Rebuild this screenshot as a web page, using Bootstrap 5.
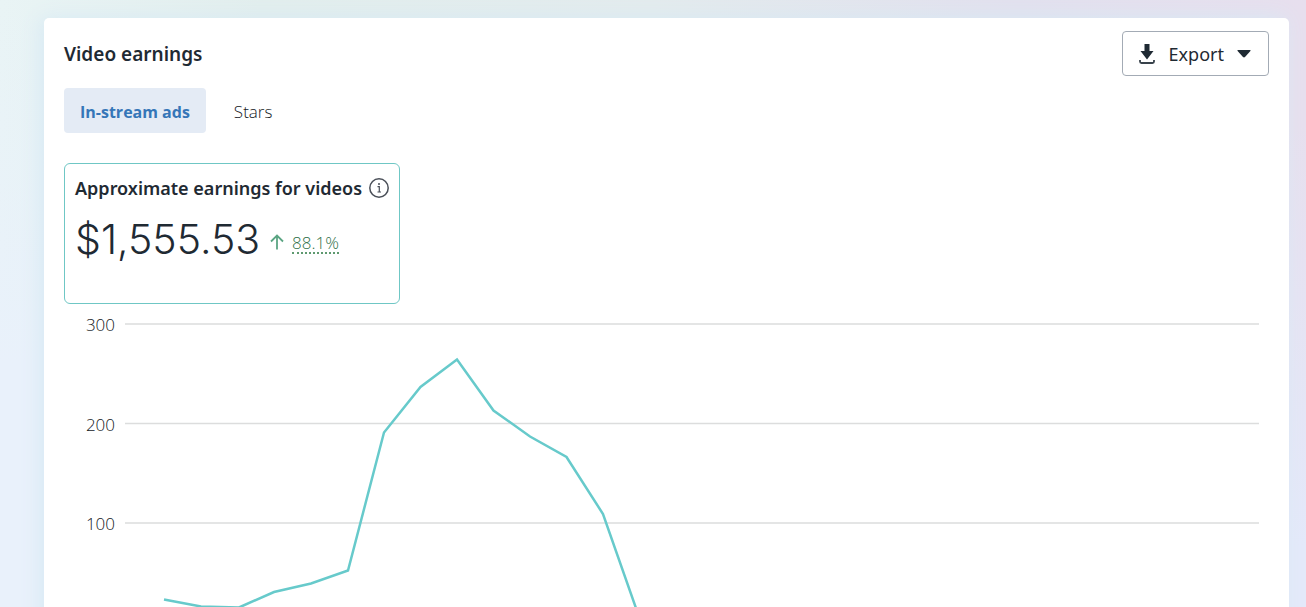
<!DOCTYPE html>
<html lang="en">
<head>
<meta charset="utf-8">
<meta name="viewport" content="width=device-width, initial-scale=1">
<title>Video earnings</title>
<link href="https://cdn.jsdelivr.net/npm/bootstrap@5.3.0/dist/css/bootstrap.min.css" rel="stylesheet">
<style>
  body {
    font-family: "Noto Sans", "Open Sans", sans-serif;
    color: #1f2a33;
    background:
      linear-gradient(to bottom, transparent 0, #e9f1fb 60%) left / 44px 100% no-repeat,
      linear-gradient(to bottom, transparent 20%, #e4e9fa 90%) right / 17px 100% no-repeat,
      linear-gradient(to right, #e9f4f5 0, #e2eeed 20%, #e3ebed 50%, #e2e0ee 78%, #e7dfee 100%);
  }
  .page-frame { padding: 18px 17px 0 44px; }
  .panel { border-radius: 5px 5px 0 0; padding: 13px 20px 0; box-shadow: -4px 0 20px #d8eaf4; }
  .panel-title { font-size: 19px; line-height: 24px; font-weight: 600; }
  .btn-export {
    --bs-btn-color: #1f2a33; --bs-btn-border-color: #a3abb5; --bs-btn-border-radius: 4px;
    --bs-btn-padding-x: 16px; --bs-btn-padding-y: 0;
    height: 45px; font-size: 18px; line-height: 24px;
  }
  .tabs { gap: 12px; margin-top: 12px; --bs-nav-pills-border-radius: 4px; }
  .tabs .nav-link {
    height: 45px; padding: 2px 16px 0; color: #14181e; font-family: "Open Sans", sans-serif; font-size: 17px; font-weight: 300; line-height: 24px;
  }
  .tabs .nav-link.active { background: #e4ebf5; color: #3576b8; font-size: 16px; font-weight: 700; }
  .metric { width: 336px; max-width: 100%; height: 141px; margin-top: 30px; padding: 12px 10px; border: 1px solid #6fc7c5; border-radius: 6px; }
  .metric-name { font-size: 18px; line-height: 24px; font-weight: 600; }
  .metric-value { font-family: Inter, sans-serif; font-size: 41px; line-height: 46px; font-weight: 300; }
  .metric-change { color: #2f7049; font-family: "Open Sans", sans-serif; font-size: 17px; font-weight: 300; line-height: 18px; border-bottom: 2px dotted #5f9a70; text-decoration: none; }
  .trend { padding-top: 10px; gap: 8px; margin-left: 10px; }
  .chart { margin-top: 20px; padding: 0 10px 0 20px; gap: 10px; }
  .y-axis { width: 31px; height: 223px; margin-top: -11px; font-family: "Open Sans", sans-serif; font-size: 17px; font-weight: 300; line-height: 24px; color: #14181e; }
  .plot { height: 320px; min-width: 0; overflow: visible; }
  .plot path { fill: none; vector-effect: non-scaling-stroke; }
</style>
</head>
<body class="vh-100 overflow-hidden">
<main class="page-frame">
  <section class="panel bg-white">
    <header class="d-flex justify-content-between align-items-center">
      <h1 class="panel-title mb-0">Video earnings</h1>
      <button type="button" class="btn btn-export d-flex align-items-center">
        <svg class="me-2" width="18" height="22" viewBox="0 0 18 22" aria-hidden="true"><path d="M5.500 1h5v7H14.500L8 16.500 1.500 8H5.500z" fill="#1f2a33"/><path d="M1 17v1.500q0 1.500 1.500 1.500h11q1.500 0 1.500-1.500V17" fill="none" stroke="#38424b" stroke-width="1.800"/></svg>
        <span class="ms-1 me-2">Export</span>
        <svg class="ms-1" width="16" height="10" viewBox="0 0 16 10" aria-hidden="true"><path d="M2 1h12q1 0 .4.900L9 8q-1 .900-2 0L1.600 1.900Q1 1 2 1z" fill="#1f2a33"/></svg>
      </button>
    </header>
    <nav class="nav nav-pills tabs" aria-label="Earnings source">
      <a class="nav-link active d-flex align-items-center" aria-current="page" href="#">In-stream ads</a>
      <a class="nav-link d-flex align-items-center" href="#">Stars</a>
    </nav>
    <article class="metric">
      <div class="d-flex align-items-center justify-content-between">
        <h2 class="metric-name mb-0 text-nowrap">Approximate earnings for videos</h2>
        <svg width="20" height="20" viewBox="0 0 20 20" aria-hidden="true"><circle cx="10" cy="10" r="9.200" fill="none" stroke="#4a4f58" stroke-width="1.500"/><path d="M8.500 8.700h1.800V14M8.500 14h3.500" fill="none" stroke="#4a4f58" stroke-width="1.200"/><circle cx="10" cy="6" r="1" fill="#4a4f58"/></svg>
      </div>
      <div class="d-flex align-items-center mt-3">
        <span class="metric-value">$1,555.53</span>
        <span class="trend d-flex align-items-start">
          <svg width="14" height="16" viewBox="0 0 14 16" aria-hidden="true"><path d="M7 15.500V2M1 7.500l6-6 6 6" fill="none" stroke="#5ba583" stroke-width="1.800"/></svg>
          <a href="#" class="metric-change">88.1%</a>
        </span>
      </div>
    </article>
    <div class="chart d-flex align-items-start">
      <div class="y-axis d-flex flex-column justify-content-between align-items-end">
        <span>300</span><span>200</span><span>100</span>
      </div>
      <svg class="plot flex-grow-1" viewBox="0 0 1134 320" preserveAspectRatio="none" role="img" aria-label="Daily earnings">
        <path d="M0 0H1134M0 99.500H1134M0 199H1134" stroke="#dcdddd" stroke-width="1.500"/>
        <path d="M39 275.500L76 282.500 114 283.500 149 268 186 259.500 223 246.500 259 108.500 295.500 63 332 35.500 368.500 86.500 405 112.500 441.500 133 478 190 512 287 524 320" stroke="#67cacb" stroke-width="2.500" stroke-linejoin="miter"/>
      </svg>
    </div>
  </section>
</main>
<script src="https://cdn.jsdelivr.net/npm/bootstrap@5.3.0/dist/js/bootstrap.bundle.min.js"></script>
</body>
</html>
